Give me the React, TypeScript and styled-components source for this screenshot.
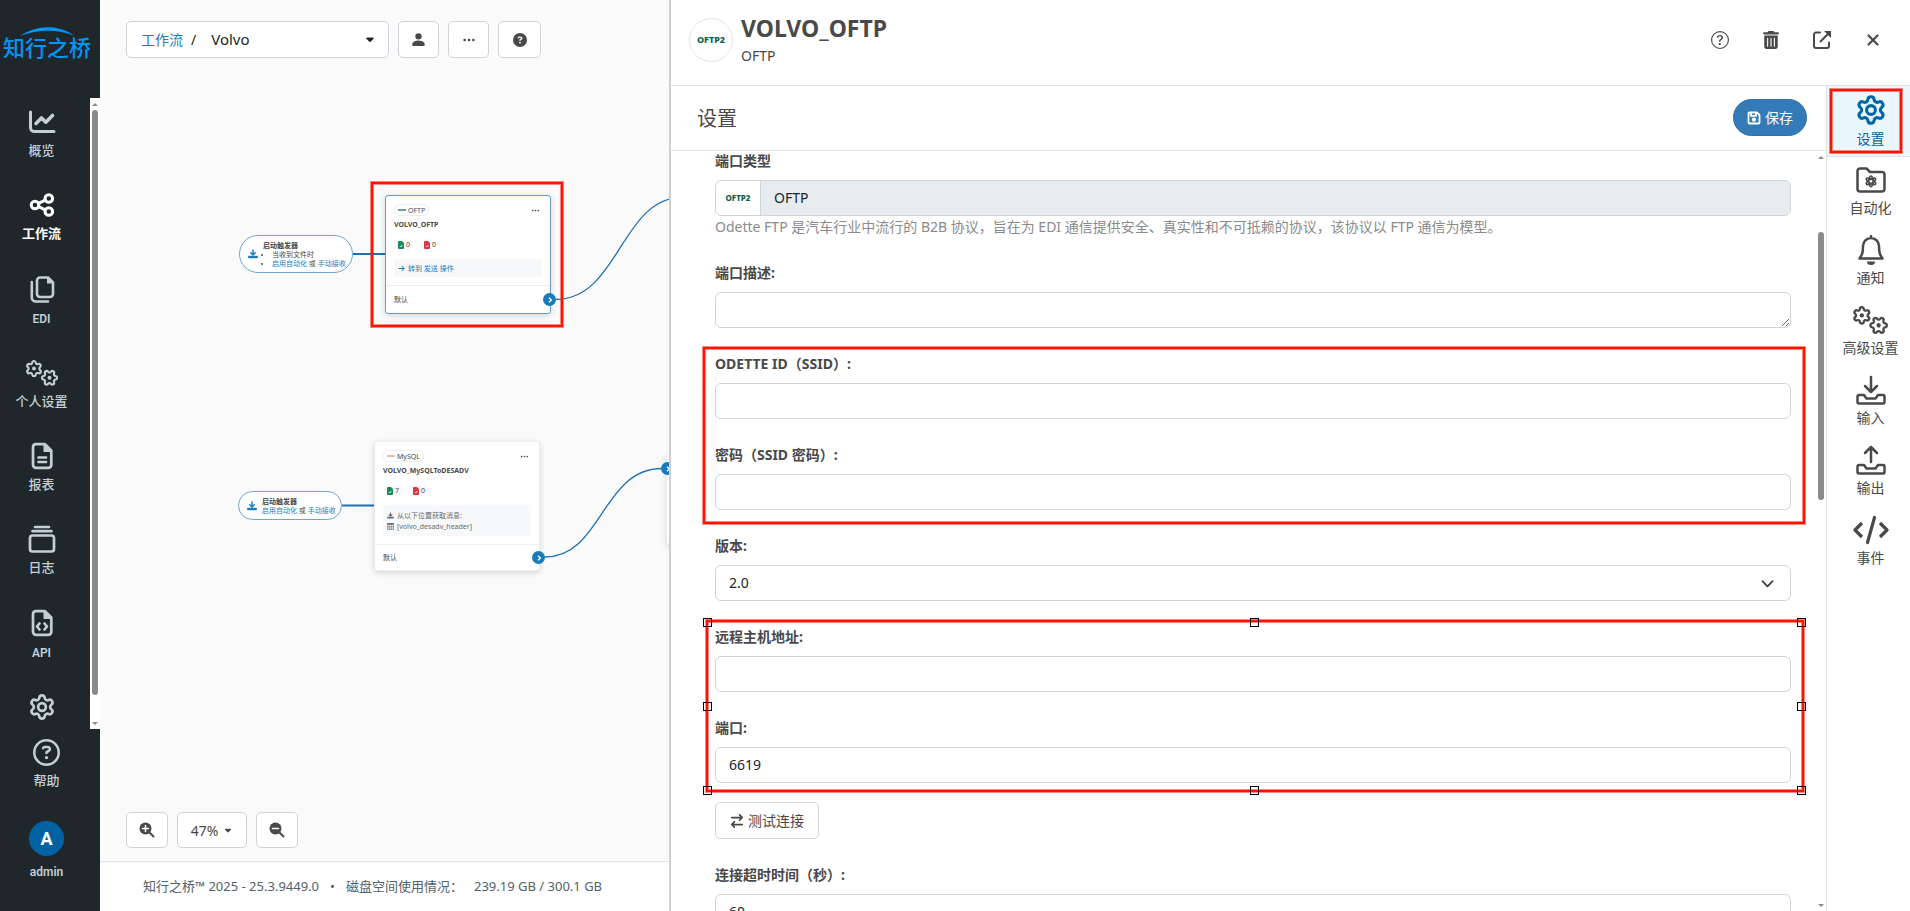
import React from 'react';
import styled, { createGlobalStyle, css } from 'styled-components';
import { FaArrowRightArrowLeft, FaCaretDown, FaCircleQuestion, FaRegCircleQuestion, FaTrashCan, FaArrowRight } from 'react-icons/fa6';
import { BsPersonFill, BsQuestionCircle, BsTable, BsThreeDots } from 'react-icons/bs';

const GlobalStyle = createGlobalStyle`
  *, *::before, *::after { box-sizing: border-box; }
  body {
    margin: 0;
    font-family: "Noto Sans", "Noto Sans CJK SC", sans-serif;
    font-size: 14px;
    line-height: 21px;
    color: #494949;
    background: #fafafa;
  }
  button, input, select, textarea { font: inherit; color: inherit; margin: 0; }
  a { color: inherit; text-decoration: none; }
  ul, h1, h2, h3, p { margin: 0; padding: 0; }
  ul { list-style: none; }
  svg { display: block; flex: none; }
`;

const Shell = styled.div`
  display: grid;
  grid-template-columns: 100px 569fr 1241fr;
  height: 100vh;
  overflow: hidden;
`;

/* ---------- sidebar ---------- */

const Sidebar = styled.aside`
  display: flex;
  flex-direction: column;
  min-height: 0;
  background: #1f272b;
  color: #c3ced5;
  font-family: Roboto, "Noto Sans CJK SC", sans-serif;
  font-weight: 500;
`;

const Brand = styled.a`
  display: flex;
  flex-direction: column;
  align-items: center;
  height: 98px;
  padding: 27px 6px 0 0;
  color: #0095f6;
  font-size: 22px;
  line-height: 26px;
  font-weight: 500;
  white-space: nowrap;
`;

const NavArea = styled.div`
  display: flex;
  flex: 1;
  min-height: 0;
`;

const NavList = styled.ul`
  display: flex;
  flex: 1;
  flex-direction: column;
  justify-content: space-between;
  padding: 10px 7px 8px 0;
  overflow: hidden;
`;

const NavLink = styled.a<{ $active?: boolean; $latin?: boolean }>`
  display: flex;
  flex-direction: column;
  align-items: center;
  gap: ${(p) => (p.$latin ? 6 : 5)}px;
  font-size: ${(p) => (p.$latin ? 12 : 13)}px;
  line-height: 20px;
  font-weight: ${(p) => (p.$active || p.$latin ? 600 : 500)};
  color: ${(p) => (p.$active ? '#ffffff' : 'inherit')};
`;

const SidebarFoot = styled.div`
  display: flex;
  flex-direction: column;
  gap: 30px;
  height: 182px;
  padding: 10px 7px 0 0;
`;

const Avatar = styled.span`
  display: grid;
  place-items: center;
  width: 35px;
  height: 35px;
  border-radius: 50%;
  background: #0062a3;
  color: #ffffff;
  font-size: 18px;
  font-weight: 700;
`;

/* ---------- scroll track ---------- */

const Track = styled.div<{ $before: number; $size: number; $after: number }>`
  display: grid;
  grid-template-rows: 12px ${(p) => p.$before}fr ${(p) => p.$size}fr ${(p) => p.$after}fr 12px;
  justify-items: center;
  align-items: center;
  width: 10px;
  background: #ffffff;
`;

const Thumb = styled.span`
  grid-row: 3;
  width: 6px;
  height: 100%;
  border-radius: 3px;
  background: #8b8b8b;
`;

const Arrow = styled.span<{ $down?: boolean }>`
  grid-row: ${(p) => (p.$down ? 5 : 1)};
  border: 3px solid transparent;
  ${(p) => (p.$down ? 'border-top-color: #8b8b8b; border-bottom: 0;' : 'border-bottom-color: #8b8b8b; border-top: 0;')}
`;

function ScrollTrack(props: { before: number; size: number; after: number }) {
  return (
    <Track $before={props.before} $size={props.size} $after={props.after} aria-hidden="true">
      <Arrow />
      <Thumb />
      <Arrow $down />
    </Track>
  );
}

/* ---------- canvas ---------- */

const Workspace = styled.main`
  display: flex;
  flex-direction: column;
  min-width: 0;
  overflow: hidden;
`;

const Stage = styled.section`
  position: relative;
  display: flex;
  flex: 1;
  flex-direction: column;
  justify-content: space-between;
  min-height: 0;
  padding: 21px 26px 13px;
  overflow: hidden;
`;

const Toolbar = styled.div`
  position: relative;
  display: flex;
  align-items: center;
  gap: 9px;
`;

const outlined = css`
  display: flex;
  align-items: center;
  justify-content: center;
  border: 1px solid #ced4da;
  border-radius: 5px;
  background: #ffffff;
  color: #494949;
`;

const Crumbs = styled.nav`
  ${outlined}
  justify-content: flex-start;
  gap: 8px;
  width: 263px;
  height: 37px;
  padding: 0 12px 1px 14px;
  color: #212529;
  a { color: #1a7bbd; }
`;

const CrumbToggle = styled.button`
  display: flex;
  flex: 1;
  align-items: center;
  justify-content: space-between;
  padding: 0 0 0 7px;
  border: 0;
  background: none;
  font-size: 15px;
`;

const ToolButton = styled.button<{ $w: number }>`
  ${outlined}
  gap: 5px;
  width: ${(p) => p.$w}px;
  height: 36px;
  padding: 0;
`;

const TopButton = styled(ToolButton)`
  height: 37px;
`;

const Footer = styled.footer`
  display: flex;
  align-items: center;
  gap: 11px;
  height: 50px;
  padding: 0 43px;
  border-top: 1px solid #dee5e9;
  background: #ffffff;
  color: #51626d;
  font-size: 13px;
  white-space: nowrap;
`;

const Plane = styled.div`
  position: absolute;
  inset: 0;
  font-size: 7px;
  line-height: 9px;
`;

const Wires = styled.svg`
  position: absolute;
  inset: 0;
  width: 100%;
  height: 100%;
  fill: none;
  stroke: #1f6fb5;
`;

const Trigger = styled.div<{ $x: number; $y: number; $w: number; $h: number }>`
  position: absolute;
  left: ${(p) => p.$x}px;
  top: ${(p) => p.$y}px;
  display: flex;
  align-items: center;
  gap: 5px;
  width: ${(p) => p.$w}px;
  height: ${(p) => p.$h}px;
  padding-left: 8px;
  border: 1px solid #6ba6cb;
  border-radius: 20px;
  background: #ffffff;
  white-space: nowrap;
  > svg { color: #1a7bbd; }
  a { color: #1a7bbd; }
  ul { padding-left: 9px; list-style: disc; }
`;

const Card = styled.article<{ $x: number; $y: number; $h: number; $selected?: boolean }>`
  position: absolute;
  left: ${(p) => p.$x}px;
  top: ${(p) => p.$y}px;
  display: flex;
  flex-direction: column;
  width: 166px;
  height: ${(p) => p.$h}px;
  border: 1px solid ${(p) => (p.$selected ? '#62a0ca' : '#ececec')};
  border-radius: 3px;
  background: #ffffff;
  box-shadow: 0 2px 6px rgba(0, 0, 0, 0.14);
  white-space: nowrap;
`;

const CardBody = styled.div`
  flex: 1;
  padding: 8px;
`;

const CardHead = styled.div`
  display: flex;
  align-items: center;
  justify-content: space-between;
  padding-right: 2px;
`;

const KindPill = styled.span`
  display: flex;
  align-items: center;
  gap: 2px;
  height: 12px;
  padding: 0 3px;
  border: 1px solid #ececec;
  border-radius: 6px;
`;

const TinyLogo = styled.i<{ $color: string }>`
  width: 8px;
  height: 2px;
  background: ${(p) => p.$color};
  opacity: 0.6;
`;

const CardTitle = styled.h3`
  margin: 4px 0 9px;
  font-size: 7px;
  line-height: 10px;
  font-weight: 700;
`;

const Counts = styled.div`
  display: flex;
  gap: 6px;
`;

const Count = styled.span`
  display: flex;
  align-items: center;
  gap: 2px;
  height: 11px;
  padding: 0 4px;
  border-radius: 6px;
  background: #fafafa;
`;

const Note = styled.div<{ $link?: boolean }>`
  display: flex;
  flex-direction: column;
  justify-content: center;
  margin-top: 9px;
  height: ${(p) => (p.$link ? 18 : 31)}px;
  padding: 0 4px;
  border-radius: 2px;
  background: #f6f8fa;
  color: ${(p) => (p.$link ? '#1a7bbd' : '#6c6c6c')};
`;

const NoteLine = styled.span`
  display: flex;
  align-items: center;
  gap: 3px;
  line-height: 11px;
`;

const CardFoot = styled.div`
  display: flex;
  align-items: center;
  height: 28px;
  padding: 0 8px;
  border-top: 1px solid #efefef;
`;

const Socket = styled.button<{ $x: number; $y: number }>`
  position: absolute;
  left: ${(p) => p.$x}px;
  top: ${(p) => p.$y}px;
  display: grid;
  place-items: center;
  width: 13px;
  height: 13px;
  padding: 0;
  border: 0;
  border-radius: 50%;
  background: #187cba;
  color: #ffffff;
`;

/* ---------- red mark-up ---------- */

const Mark = styled.div<{ $inset: string }>`
  position: absolute;
  inset: ${(p) => p.$inset};
  border: 2px solid #ff1200;
  box-shadow: 0 0 0 1px rgba(255, 18, 0, 0.5), inset 0 0 0 1px rgba(255, 18, 0, 0.5);
  pointer-events: none;
`;

const CanvasMark = styled(Mark)`
  left: 271px;
  top: 182px;
  width: 192px;
  height: 145px;
`;

const Handle = styled.i<{ $x: number; $y: number }>`
  position: absolute;
  left: ${(p) => p.$x}%;
  top: ${(p) => p.$y}%;
  width: 9px;
  height: 9px;
  margin: -4px 0 0 -5px;
  border: 1px solid #000000;
`;

/* ---------- panel ---------- */

const Panel = styled.section`
  display: flex;
  flex-direction: column;
  min-width: 0;
  min-height: 0;
  border-left: 2px solid #cfcfcf;
  background: #ffffff;
`;

const PanelHead = styled.header`
  display: flex;
  align-items: center;
  gap: 8px;
  height: 86px;
  padding: 0 22px 6px 18px;
  border-bottom: 1px solid #dee3e7;
`;

const Emblem = styled.div`
  display: grid;
  place-items: center;
  width: 44px;
  height: 44px;
  border: 1px solid #e2e6e9;
  border-radius: 50%;
  color: #0b5d4e;
  font-size: 9px;
  font-weight: 800;
`;

const PanelTitle = styled.h1`
  font-size: 23px;
  line-height: 30px;
  font-weight: 700;
`;

const PanelName = styled.div`
  flex: 1;
  padding-top: 1px;
  line-height: 25px;
`;

const HeadActions = styled.div`
  display: flex;
  gap: 20px;
`;

const IconButton = styled.button`
  display: grid;
  place-items: center;
  width: 31px;
  height: 32px;
  padding: 0;
  border: 0;
  background: none;
`;

const PanelBody = styled.div`
  display: flex;
  flex: 1;
  min-height: 0;
`;

const PanelMain = styled.div`
  display: flex;
  flex: 1;
  flex-direction: column;
  min-width: 0;
`;

const SectionHead = styled.div`
  display: flex;
  align-items: center;
  justify-content: space-between;
  flex: none;
  height: 65px;
  padding: 0 19px 1px 26px;
  border-bottom: 1px solid #dee3e7;
  h2 { padding-top: 2px; font-size: 20px; line-height: 26px; font-weight: 400; }
`;

const SaveButton = styled.button`
  display: flex;
  align-items: center;
  gap: 4px;
  height: 37px;
  padding: 0 13px;
  border: 1px solid #2f72aa;
  border-radius: 19px;
  background: #347ab7;
  color: #ffffff;
`;

const ScrollRegion = styled.div`
  display: flex;
  flex: 1;
  min-height: 0;
`;

const Form = styled.form`
  flex: 1;
  min-width: 0;
  padding: 0 25px 0 44px;
  overflow: hidden;
`;

const Group = styled.div`
  position: relative;
  margin-bottom: 26px;
`;

const Field = styled.div`
  position: relative;
  & + & { margin-top: 26px; }
`;

const Label = styled.label`
  display: block;
  margin-bottom: 10px;
  line-height: 19px;
  font-weight: 700;
`;

const control = css`
  display: block;
  width: 100%;
  height: 36px;
  padding: 0 13px 2px;
  border: 1px solid #ced4da;
  border-radius: 6px;
  background: #ffffff;
  color: #212529;
  outline: 0;
`;

const TextInput = styled.input`${control}`;

const TextArea = styled.textarea`
  ${control}
  resize: vertical;
`;

const Select = styled.select`
  ${control}
  appearance: none;
`;

const Chevron = styled.svg`
  position: absolute;
  right: 17px;
  bottom: 11px;
  pointer-events: none;
`;

const TypeBox = styled.div`
  display: flex;
  height: 36px;
  border: 1px solid #ced4da;
  border-radius: 6px;
  overflow: hidden;
`;

const TypeLogo = styled.span`
  display: grid;
  place-items: center;
  width: 45px;
  padding-bottom: 2px;
  border-right: 1px solid #ced4da;
  color: #0b5d4e;
  font-size: 8px;
  font-weight: 800;
`;

const TypeInput = styled.input`
  flex: 1;
  padding: 0 13px 2px;
  border: 0;
  background: #e9ecef;
  color: #212529;
`;

const Hint = styled.p`
  color: #8a8a8a;
  line-height: 21px;
`;

const TestButton = styled.button`
  ${outlined}
  gap: 4px;
  height: 37px;
  padding: 0 14px;
  margin: -7px 0 26px;
`;

const Rail = styled.nav`
  width: 84px;
  border-left: 1px solid #dee3e7;
`;

const RailItem = styled.a<{ $active?: boolean }>`
  position: relative;
  display: flex;
  flex-direction: column;
  align-items: center;
  gap: 2px;
  height: 70px;
  padding: 8px 0 0 4px;
  color: ${(p) => (p.$active ? '#0066a6' : 'inherit')};
  background: ${(p) => (p.$active ? '#ebf7fe' : 'transparent')};
  ${(p) => p.$active && 'height: 71px; border-bottom: 1px solid #dee3e7;'}
`;

/* ---------- icons ---------- */

const GEAR =
  'M9.671 4.136a2.34 2.34 0 0 1 4.659 0 2.34 2.34 0 0 0 3.319 1.915 2.34 2.34 0 0 1 2.33 4.033 2.34 2.34 0 0 0 0 3.831 2.34 2.34 0 0 1-2.33 4.033 2.34 2.34 0 0 0-3.319 1.915 2.34 2.34 0 0 1-4.659 0 2.34 2.34 0 0 0-3.32-1.915 2.34 2.34 0 0 1-2.33-4.033 2.34 2.34 0 0 0 0-3.831A2.34 2.34 0 0 1 6.35 6.051a2.34 2.34 0 0 0 3.319-1.915';

function Glyph({ size = 28, w = 2.5, box = 28, children }: { size?: number; w?: number; box?: number; children: React.ReactNode }) {
  return (
    <svg width={size} height={size} viewBox={`0 0 ${box} ${box}`} fill="none" stroke="currentColor" strokeWidth={w} strokeLinecap="round" strokeLinejoin="round" aria-hidden="true">
      {children}
    </svg>
  );
}

const ChartIcon = () => (
  <Glyph w={3}>
    <path d="M2.5 4v15.500a4 4 0 0 0 4 4H26" />
    <path d="M8 15.500l5.500-5.500 4.300 4.200 6.700-6.700" strokeWidth="3.600" />
  </Glyph>
);
const ShareIcon = () => (
  <Glyph w={3}>
    <circle cx="7" cy="14" r="3.8" />
    <circle cx="20.8" cy="7.5" r="3.8" />
    <circle cx="20.8" cy="20.5" r="3.8" />
    <path d="M10.5 12.3l6.8-3.2M10.5 15.7l6.8 3.2" />
  </Glyph>
);
const CopyIcon = () => (
  <Glyph w={2.6}>
    <path d="M12 2.5h8l5 5V19a3 3 0 0 1-3 3H12a3 3 0 0 1-3-3V5.500a3 3 0 0 1 3-3zM3.800 7v15.500a4 4 0 0 0 4 4H20" />
    <path d="M19 2.500V8.500H25z" fill="currentColor" stroke="none" />
  </Glyph>
);
const GearIcon = ({ size = 28 }: { size?: number }) => (
  <Glyph size={size} box={24} w={2.300}>
    <path d={GEAR} />
    <circle cx="12" cy="12" r="3.300" />
  </Glyph>
);
const GearsIcon = ({ size = 36 }: { size?: number }) => (
  <svg width={size} height={(size * 28) / 36} viewBox="0 0 36 28" fill="none" stroke="currentColor" strokeWidth="2.800" aria-hidden="true">
    <g transform="translate(10 9.600) scale(.76) translate(-12 -12)">
      <path d={GEAR} />
      <circle cx="12" cy="12" r="2.600" fill="currentColor" stroke="none" />
    </g>
    <g transform="translate(25.500 18.800) rotate(30) scale(.76) translate(-12 -12)">
      <path d={GEAR} />
      <circle cx="12" cy="12" r="2.600" fill="currentColor" stroke="none" />
    </g>
  </svg>
);
const FileShell = ({ children }: { children: React.ReactNode }) => (
  <Glyph w={2.700}>
    <path d="M7.500 2.200h9.500l6.300 6.300V22.800a3 3 0 0 1-3 3H8a3 3 0 0 1-3-3V5.200a3 3 0 0 1 2.500-3z" />
    <path d="M15.500 1.800V10H24z" fill="currentColor" stroke="none" />
    {children}
  </Glyph>
);
const ReportIcon = () => <FileShell><path d="M10.500 15.500h7.500M10.500 20h7.500" /></FileShell>;
const ApiIcon = () => <FileShell><path d="M11.500 14.500l-2.500 3 2.500 3M16.500 14.500l2.500 3-2.500 3" /></FileShell>;
const LogIcon = () => (
  <Glyph w={2.700}>
    <rect x="2" y="10.500" width="24" height="16" rx="2.500" />
    <path d="M4.500 6.200h19M7 2h14" />
  </Glyph>
);
const LensIcon = ({ plus }: { plus?: boolean }) => (
  <Glyph size={16} box={16} w={2}>
    <circle cx="6.500" cy="6.500" r="6" fill="currentColor" stroke="none" />
    <path d="M10.500 10.500l4 4" />
    <path d={plus ? 'M3.500 6.500h6M6.500 3.500v6' : 'M3.500 6.500h6'} stroke="#fff" strokeWidth="1.600" />
  </Glyph>
);
const DropIcon = ({ size = 10 }: { size?: number }) => (
  <Glyph size={size} box={10} w={1.500}>
    <path d="M5 1v4.500M2.800 3.800L5 6l2.200-2.200" />
    <path d="M1.200 8h7.600" strokeWidth="2.400" />
  </Glyph>
);
const OpenIcon = () => (
  <Glyph size={20} box={20} w={2}>
    <path d="M8 2.500H4a2 2 0 0 0-2 2V16a2 2 0 0 0 2 2h11a2 2 0 0 0 2-2v-3.500M8.500 11.500L16 4" />
    <path d="M12 1h7v7z" fill="currentColor" stroke="none" />
  </Glyph>
);
const CloseIcon = () => <Glyph size={14} box={14} w={2.200}><path d="M2.500 2.500l9 9M11.500 2.500l-9 9" /></Glyph>;
const SaveIcon = () => (
  <Glyph size={14} box={14} w={1.800}>
    <path d="M2.500 1.500h7.500l2.500 2.500v7.500a1 1 0 0 1-1 1h-9a1 1 0 0 1-1-1v-9a1 1 0 0 1 1-1zM4 1.800v3h5v-3" />
    <circle cx="7" cy="8.700" r="1.200" fill="currentColor" />
  </Glyph>
);
const FolderIcon = () => (
  <Glyph size={30} box={30}>
    <path d="M4 3.500h6.500l3.500 3.500h12a2.500 2.500 0 0 1 2.500 2.500V24a2.500 2.500 0 0 1-2.500 2.500H4A2.500 2.500 0 0 1 1.500 24V6A2.500 2.500 0 0 1 4 3.500z" />
    <g transform="translate(8.600 10) scale(.53)" strokeWidth="3"><path d={GEAR} /><circle cx="12" cy="12" r="4.800" strokeWidth="4" /></g>
  </Glyph>
);
const BellIcon = () => (
  <Glyph size={30} box={30}>
    <path d="M15 3a8 8 0 0 1 8 8c0 7 1 9 3.500 12.500h-23C6 20 7 18 7 11a8 8 0 0 1 8-8zM15 1v1.500" />
    <path d="M11 26.500h8a4 3.500 0 0 1-8 0z" fill="currentColor" stroke="none" />
  </Glyph>
);
const TrayIcon = ({ up }: { up?: boolean }) => (
  <Glyph size={30} box={30}>
    <path d={up ? 'M15 17V2M9 8l6-6 6 6' : 'M15 2v14M9 11l6 6 6-6'} />
    <path d="M3 20h5l2.500 3.500h9L22 20h5a1.500 1.500 0 0 1 1.500 1.500V27A1.500 1.500 0 0 1 27 28.500H3A1.500 1.500 0 0 1 1.500 27v-5.500A1.500 1.500 0 0 1 3 20z" />
  </Glyph>
);
const CodeIcon = () => (
  <svg width="36" height="30" viewBox="0 0 36 30" fill="none" stroke="currentColor" strokeWidth="3.200" strokeLinejoin="round" aria-hidden="true">
    <path d="M9 8l-7 7 7 7M27 8l7 7-7 7" />
    <path d="M21.500 2.500l-7 25" strokeLinecap="round" />
  </svg>
);
const DocIcon = ({ color }: { color: string }) => (
  <svg width="6" height="8" viewBox="0 0 6 8" aria-hidden="true">
    <path d="M1 0h3l2 2v5a1 1 0 0 1-1 1H1a1 1 0 0 1-1-1V1a1 1 0 0 1 1-1z" fill={color} />
    <path d="M1.800 5l1 1 1.600-2" stroke="#fff" strokeWidth=".8" fill="none" />
  </svg>
);
const Chev = () => (
  <svg width="6" height="6" viewBox="0 0 6 6" fill="none" stroke="currentColor" strokeWidth="1.400" aria-hidden="true"><path d="M2 .8L4.300 3 2 5.200" /></svg>
);

/* ---------- data ---------- */

const NAV = [
  { label: '概览', icon: <ChartIcon /> },
  { label: '工作流', icon: <ShareIcon />, active: true },
  { label: 'EDI', icon: <CopyIcon />, latin: true },
  { label: '个人设置', icon: <GearsIcon /> },
  { label: '报表', icon: <ReportIcon /> },
  { label: '日志', icon: <LogIcon /> },
  { label: 'API', icon: <ApiIcon />, latin: true },
];

const RAIL = [
  { label: '设置', icon: <GearIcon size={32} /> },
  { label: '自动化', icon: <FolderIcon /> },
  { label: '通知', icon: <BellIcon /> },
  { label: '高级设置', icon: <GearsIcon size={39} /> },
  { label: '输入', icon: <TrayIcon /> },
  { label: '输出', icon: <TrayIcon up /> },
  { label: '事件', icon: <CodeIcon /> },
];

const HANDLES = [[0, 0], [50, 0], [100, 0], [0, 50], [100, 50], [0, 100], [50, 100], [100, 100]];

function NodeHead(props: { kind: string; logo: string; name: string; done: number; failed: number }) {
  return (
    <>
      <CardHead>
        <KindPill><TinyLogo $color={props.logo} />{props.kind}</KindPill>
        <BsThreeDots size={9} />
      </CardHead>
      <CardTitle>{props.name}</CardTitle>
      <Counts>
        <Count><DocIcon color="#1c8a5a" />{props.done}</Count>
        <Count><DocIcon color="#dc3545" />{props.failed}</Count>
      </Counts>
    </>
  );
}

function TextField(props: { id: string; label: string; value?: string; type?: string }) {
  return (
    <Field>
      <Label htmlFor={props.id}>{props.label}</Label>
      <TextInput id={props.id} type={props.type ?? 'text'} defaultValue={props.value} />
    </Field>
  );
}

export default function App() {
  return (
    <>
      <GlobalStyle />
      <Shell>
        <Sidebar>
          <Brand href="#">
            <svg width="54" height="9" viewBox="0 0 54 9" aria-hidden="true">
              <path d="M0 9C16-2 38-3 54 8.500 38 2 18 2 0 9z" fill="currentColor" />
            </svg>
            知行之桥
          </Brand>
          <NavArea>
            <NavList>
              {NAV.map((n) => (
                <li key={n.label}>
                  <NavLink href="#" $active={n.active} $latin={n.latin}>{n.icon}{n.label}</NavLink>
                </li>
              ))}
              <li><NavLink href="#" aria-label="系统设置"><GearIcon /></NavLink></li>
            </NavList>
            <ScrollTrack before={0} size={585} after={22} />
          </NavArea>
          <SidebarFoot>
            <NavLink href="#"><FaRegCircleQuestion size={27} />帮助</NavLink>
            <NavLink href="#" $latin><Avatar>A</Avatar>admin</NavLink>
          </SidebarFoot>
        </Sidebar>

        <Workspace>
          <Stage>
            <Plane>
              <Wires>
                <path d="M253 254H286M242 505.500H275" strokeWidth="2" />
                <path d="M455 299.500C520 299.500 520 197 584 197M445 557C502 557 502 468.500 562 468.500" strokeWidth="1.300" />
              </Wires>
              <Trigger $x={139} $y={235} $w={114} $h={38}>
                <DropIcon />
                <div>
                  <b>启动触发器</b>
                  <ul>
                    <li>当收到文件时</li>
                    <li><a href="#">启用自动化</a> 或 <a href="#">手动接收</a></li>
                  </ul>
                </div>
              </Trigger>
              <Trigger $x={138} $y={491} $w={104} $h={29}>
                <DropIcon />
                <div>
                  <b>启动触发器</b>
                  <div><a href="#">启用自动化</a> 或 <a href="#">手动接收</a></div>
                </div>
              </Trigger>
              <Card $x={285} $y={195} $h={119} $selected>
                <CardBody>
                  <NodeHead kind="OFTP" logo="#0b5d4e" name="VOLVO_OFTP" done={0} failed={0} />
                  <Note $link><NoteLine><FaArrowRight size={7} />转到 发送 操作</NoteLine></Note>
                </CardBody>
                <CardFoot>默认</CardFoot>
              </Card>
              <Card $x={274} $y={441} $h={130}>
                <CardBody>
                  <NodeHead kind="MySQL" logo="#e2906a" name="VOLVO_MySQLToDESADV" done={7} failed={0} />
                  <Note>
                    <NoteLine><DropIcon size={7} />从以下位置获取消息:</NoteLine>
                    <NoteLine><BsTable size={7} />[volvo_desadv_header]</NoteLine>
                  </Note>
                </CardBody>
                <CardFoot>默认</CardFoot>
              </Card>
              <Card $x={566} $y={453} $h={92} />
              <Socket $x={443} $y={293} aria-label="输出"><Chev /></Socket>
              <Socket $x={432} $y={551} aria-label="输出"><Chev /></Socket>
              <Socket $x={561} $y={462} aria-label="输入"><Chev /></Socket>
              <CanvasMark $inset="auto" />
            </Plane>

            <Toolbar>
              <Crumbs>
                <a href="#">工作流</a>/
                <CrumbToggle type="button">Volvo<FaCaretDown size={12} /></CrumbToggle>
              </Crumbs>
              <TopButton $w={41} type="button" aria-label="用户"><BsPersonFill size={17} /></TopButton>
              <TopButton $w={41} type="button" aria-label="更多"><BsThreeDots size={14} /></TopButton>
              <TopButton $w={43} type="button" aria-label="帮助"><FaCircleQuestion size={14} /></TopButton>
            </Toolbar>
            <Toolbar>
              <ToolButton $w={42} type="button" aria-label="放大"><LensIcon plus /></ToolButton>
              <ToolButton $w={70} type="button">47%<FaCaretDown size={10} /></ToolButton>
              <ToolButton $w={42} type="button" aria-label="缩小"><LensIcon /></ToolButton>
            </Toolbar>
          </Stage>
          <Footer>
            <span>知行之桥™ 2025 - 25.3.9449.0</span>
            <span>•</span>
            <span>磁盘空间使用情况：</span>
            <span>239.19 GB / 300.1 GB</span>
          </Footer>
        </Workspace>

        <Panel>
          <PanelHead>
            <Emblem>OFTP2</Emblem>
            <PanelName>
              <PanelTitle>VOLVO_OFTP</PanelTitle>
              OFTP
            </PanelName>
            <HeadActions>
              <IconButton type="button" aria-label="帮助"><BsQuestionCircle size={18} /></IconButton>
              <IconButton type="button" aria-label="删除"><FaTrashCan size={18} /></IconButton>
              <IconButton type="button" aria-label="打开"><OpenIcon /></IconButton>
              <IconButton type="button" aria-label="关闭"><CloseIcon /></IconButton>
            </HeadActions>
          </PanelHead>
          <PanelBody>
            <PanelMain>
              <SectionHead>
                <h2>设置</h2>
                <SaveButton type="button"><SaveIcon />保存</SaveButton>
              </SectionHead>
              <ScrollRegion>
                <Form>
                  <Group>
                    <Label htmlFor="type">端口类型</Label>
                    <TypeBox>
                      <TypeLogo>OFTP2</TypeLogo>
                      <TypeInput id="type" defaultValue="OFTP" readOnly />
                    </TypeBox>
                    <Hint>Odette FTP 是汽车行业中流行的 B2B 协议，旨在为 EDI 通信提供安全、真实性和不可抵赖的协议，该协议以 FTP 通信为模型。</Hint>
                  </Group>
                  <Group>
                    <Label htmlFor="desc">端口描述:</Label>
                    <TextArea id="desc" />
                  </Group>
                  <Group>
                    <TextField id="ssid" label="ODETTE ID（SSID）:" />
                    <TextField id="password" label="密码（SSID 密码）:" type="password" />
                    <Mark $inset="-7px -14px -14px -12px" />
                  </Group>
                  <Group>
                    <Label htmlFor="version">版本:</Label>
                    <Select id="version" defaultValue="2.0"><option>2.0</option></Select>
                    <Chevron width="13" height="13" viewBox="0 0 14 14" fill="none" stroke="#343a40" strokeWidth="1.800" strokeLinecap="round" strokeLinejoin="round">
                      <path d="M1.500 4.500L7 10l5.500-5.500" />
                    </Chevron>
                  </Group>
                  <Group>
                    <TextField id="host" label="远程主机地址:" />
                    <TextField id="port" label="端口:" value="6619" />
                    <Mark $inset="-7px -13px -9px -9px">
                      {HANDLES.map(([x, y]) => <Handle key={`${x}-${y}`} $x={x} $y={y} />)}
                    </Mark>
                  </Group>
                  <TestButton type="button"><FaArrowRightArrowLeft size={14} />测试连接</TestButton>
                  <Group><TextField id="timeout" label="连接超时时间（秒）:" value="60" /></Group>
                </Form>
                <ScrollTrack before={69} size={268} after={399} />
              </ScrollRegion>
            </PanelMain>
            <Rail>
              {RAIL.map((r, i) => (
                <RailItem key={r.label} href="#" $active={i === 0}>
                  {r.icon}{r.label}
                  {i === 0 && <Mark $inset="3px 8px 3px 3px" />}
                </RailItem>
              ))}
            </Rail>
          </PanelBody>
        </Panel>
      </Shell>
    </>
  );
}
